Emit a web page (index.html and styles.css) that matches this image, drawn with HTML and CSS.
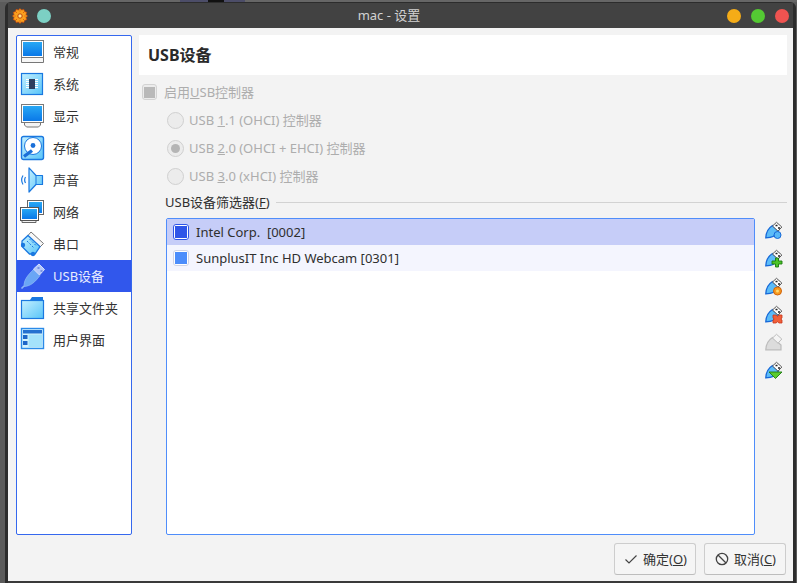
FILE: index.html
```html
<!DOCTYPE html>
<html lang="zh">
<head>
<meta charset="utf-8">
<title>mac - 设置</title>
<link rel="stylesheet" href="styles.css">
</head>
<body>
<svg class="defs" width="0" height="0">
  <defs>
    <linearGradient id="scr" x1="0" y1="0" x2="0" y2="1"><stop offset="0" stop-color="#28a8f4"/><stop offset="1" stop-color="#0a78e8"/></linearGradient>
    <linearGradient id="pale" x1="0" y1="0" x2="1" y2="1"><stop offset="0" stop-color="#c4f0ff"/><stop offset="1" stop-color="#58c4f8"/></linearGradient>
    <symbol id="plug" viewBox="0 0 17 17" overflow="visible">
      <path d="M.8 15.800 C1 10.500 3.500 6 7.500 3.500 L13.500 9 C11.500 13 8 15.800 .8 15.800Z" fill="#5cbcf8" stroke="#1668d8" stroke-width="1.300"/>
      <path d="M7.500 4 L11.500 .3 L16.800 5 L13 9.200Z" fill="#fff" stroke="#555" stroke-width="1"/>
      <path d="M10.500 3.500h2M13 6h2" stroke="#222" stroke-width="1.300"/>
    </symbol>
  </defs>
</svg>
<div class="strip"><span class="seg-a"></span><span class="seg-b"></span><span class="seg-a2"></span></div>
<div class="window">
  <header class="titlebar">
    <svg class="app-icon" width="16" height="16" viewBox="0 0 16 16"><path d="M8 .5l1.600 1.600 2.200-.7.700 2.200 2.200.7-.7 2.200L15.500 8l-1.500 1.500.7 2.200-2.200.7-.7 2.200-2.200-.7L8 15.500l-1.600-1.600-2.200.7-.7-2.200-2.200-.7.7-2.200L.5 8 2 6.500l-.7-2.200 2.200-.7.7-2.200 2.200.7Z" fill="#f9a11e" stroke="#c8480c" stroke-width=".7"/><circle cx="8" cy="8" r="2.200" fill="#ffe68a" stroke="#c0440c"/><path d="M8 2.500v1M8 12.500v1M2.500 8h1M12.500 8h1M4 4l.8.8M11.200 11.200l.8.800M12 4l-.8.800M4.800 11.200 4 12" stroke="#d8500c" stroke-width="1"/></svg>
    <span class="dot dot-teal"></span>
    <span class="title">mac - 设置</span>
    <span class="lights">
      <span class="dot dot-yellow"></span>
      <span class="dot dot-green"></span>
      <span class="dot dot-red"></span>
    </span>
  </header>
  <div class="content">
    <div class="columns">
      <nav class="sidebar">
        <div class="nav-item">
          <svg class="nav-icon" viewBox="0 0 26 26"><path d="M1.500 18.500v5h22v-5l-3-1h-16Z" fill="#f7f7f7" stroke="#777"/><rect x="1.500" y="1.500" width="22" height="17" fill="#fff" stroke="#7a7a7a"/><rect x="3" y="3" width="19" height="14" fill="url(#scr)"/></svg>
          <span>常规</span>
        </div>
        <div class="nav-item">
          <svg class="nav-icon" viewBox="0 0 26 26"><rect x="1.500" y="2.500" width="21" height="21" fill="url(#pale)" stroke="#1a78e0" stroke-width="1.200"/><rect x="9" y="8" width="6" height="10" fill="#2e3f5e"/><path d="M6 8.500h3M6 10.500h3M6 12.500h3M6 14.500h3M6 16.500h3M15 8.500h3M15 10.500h3M15 12.500h3M15 14.500h3M15 16.500h3" stroke="#fff" stroke-width="1"/></svg>
          <span>系统</span>
        </div>
        <div class="nav-item">
          <svg class="nav-icon" viewBox="0 0 26 26"><path d="M4.500 19v3l2 2h12l2-2v-3Z" fill="#f4f4f4" stroke="#777"/><rect x="1.500" y="1.500" width="22" height="18" fill="#fff" stroke="#7a7a7a"/><rect x="3" y="3" width="19" height="15" fill="url(#scr)"/></svg>
          <span>显示</span>
        </div>
        <div class="nav-item">
          <svg class="nav-icon" viewBox="0 0 26 26"><rect x="1.500" y="1.500" width="22" height="23" rx="2" fill="url(#pale)" stroke="#1a78e0" stroke-width="1.400"/><circle cx="13" cy="11" r="8.500" fill="#fff" stroke="#1a78e0"/><circle cx="13" cy="10.500" r="2.400" fill="#1a6fd8"/><path d="M4 21.500 12 15.500" stroke="#1a6fd8" stroke-width="3.400"/></svg>
          <span>存储</span>
        </div>
        <div class="nav-item">
          <svg class="nav-icon" viewBox="0 0 26 26"><path d="M9 .8 L16 8.500 H22.500 V17.500 H16 L9 25 Z" fill="url(#pale)" stroke="#1a78e0" stroke-width="1.200" stroke-linejoin="round"/><path d="M16 8.500V17.500" stroke="#1a78e0"/><path d="M3 8.500Q.3 13 3 17.500M5.500 10Q3.800 13 5.500 16" fill="none" stroke="#1a78e0" stroke-width="1.200"/></svg>
          <span>声音</span>
        </div>
        <div class="nav-item">
          <svg class="nav-icon" viewBox="0 0 26 26"><rect x="7.500" y="1.500" width="16" height="14" fill="#fff" stroke="#666"/><rect x="9" y="3" width="13" height="11" fill="url(#scr)"/><path d="M2 20v3.500h14V20" fill="#f2f2f2" stroke="#666"/><rect x=".5" y="8.500" width="18" height="13" fill="#fff" stroke="#555"/><rect x="2" y="10" width="15" height="10" fill="url(#scr)"/></svg>
          <span>网络</span>
        </div>
        <div class="nav-item">
          <svg class="nav-icon" viewBox="0 0 26 26"><path d="M11 1 L23.500 12.500 L20 16 L8 4.500Z" fill="#f8f8f8" stroke="#777"/><path d="M8 4.500 L20 15.500 L15 23 H9.500 L2 15.500 V10Z" fill="url(#pale)" stroke="#1a78e0" stroke-width="1.300"/><circle cx="3" cy="14" r="2.200" fill="#1a78e0"/><circle cx="13" cy="23" r="2.200" fill="#1a78e0"/><path d="M7 10l7 7M9.500 8l7 7" stroke="#1a78e0" stroke-dasharray="2 1.500"/></svg>
          <span>串口</span>
        </div>
        <div class="nav-item nav-item-active">
          <svg class="nav-icon" viewBox="0 0 26 26"><path d="M4 23.500 C4 17 7 13 13.500 6.500 L20 12.500 C15 19 11 23 4 23.500Z" fill="#6aa6f5" stroke="#8db6f6" stroke-width=".8"/><path d="M1.500 25.500 L4 23" stroke="#8db6f6" stroke-width="1.600"/><path d="M13.500 6 L19 1 L24.500 6.500 L19.500 12Z" fill="#b4c8f9" stroke="#dfe7fc" stroke-width=".9"/><path d="M17.500 5h2M20.500 8h2" stroke="#3a5cd0" stroke-width="1.200"/></svg>
          <span>USB设备</span>
        </div>
        <div class="nav-item">
          <svg class="nav-icon" viewBox="0 0 26 26"><path d="M10 5 12 2h11v5H10Z" fill="#1a78e0"/><rect x="1.500" y="5.500" width="22" height="18" fill="url(#pale)" stroke="#1a78e0" stroke-width="1.200"/></svg>
          <span>共享文件夹</span>
        </div>
        <div class="nav-item">
          <svg class="nav-icon" viewBox="0 0 26 26"><rect x="1.500" y="1.500" width="22" height="20" fill="#d4f2fd" stroke="#2a8ae8" stroke-width="1.400"/><rect x="3" y="3" width="19" height="3.500" fill="#2470d0"/><rect x="3" y="8" width="4.500" height="4" fill="#1e66c8"/><rect x="3" y="14" width="4.500" height="4" fill="#1e66c8"/><rect x="8.500" y="7.500" width="13.500" height="12.500" fill="#a4e2fb"/></svg>
          <span>用户界面</span>
        </div>
      </nav>
      <main class="main">
        <h1 class="page-title">USB设备</h1>
        <div class="settings">
          <label class="check-row">
            <span class="check"><span class="check-mark"></span></span>
            <span class="shift">启用<u>U</u>SB控制器</span>
          </label>
          <div class="radios">
            <div class="radio-row"><span class="radio"></span><span class="shift">USB <u>1</u>.1 (OHCI) 控制器</span></div>
            <div class="radio-row"><span class="radio radio-on"></span><span class="shift">USB <u>2</u>.0 (OHCI + EHCI) 控制器</span></div>
            <div class="radio-row"><span class="radio"></span><span class="shift">USB <u>3</u>.0 (xHCI) 控制器</span></div>
          </div>
          <div class="filters">
            <div class="group-label"><span>USB设备筛选器(<u>F</u>)</span><span class="rule"></span></div>
            <div class="filter-body">
              <div class="list">
                <div class="list-row list-row-first"><span class="box box-dark"></span><span class="shift">Intel Corp.&nbsp; [0002]</span></div>
                <div class="list-row list-row-second"><span class="box box-light"></span><span class="shift">SunplusIT Inc HD Webcam [0301]</span></div>
              </div>
              <div class="toolbar">
                <svg class="tool" viewBox="0 0 17 17"><use href="#plug"/><circle cx="12.500" cy="13" r="3.500" fill="#58b8f6" stroke="#1668d8"/></svg>
                <svg class="tool" viewBox="0 0 17 17"><use href="#plug"/><path d="M10.500 8h3V11H17v3h-3.500v3h-3v-3H7v-3h3.500Z" fill="#4cc428" stroke="#1d7a10" stroke-width=".9"/></svg>
                <svg class="tool" viewBox="0 0 17 17"><use href="#plug"/><circle cx="12.500" cy="13" r="4" fill="#f79a1e" stroke="#d0620c"/><circle cx="12.500" cy="13" r="1.500" fill="#ffd870"/></svg>
                <svg class="tool" viewBox="0 0 17 17"><use href="#plug"/><path d="M8 9h3l1.500 1.300L14 9h3v3l-1.200 1L17 14v3h-3l-1.500-1.200L11 17H8v-3l1.200-1L8 12Z" fill="#f0603a" stroke="#c8361c" stroke-width=".8"/></svg>
                <svg class="tool" viewBox="0 0 17 17"><path d="M.8 15.800 C1 10.500 3.500 6 7.500 3.500 L16 11 V15.800Z" fill="#dcdcdc" stroke="#bcbcbc" stroke-width="1.200"/><path d="M7.500 4 L11.500 .3 L16.800 5 L13 9.200Z" fill="#f4f4f4" stroke="#bdbdbd" stroke-width="1"/></svg>
                <svg class="tool" viewBox="0 0 17 17"><use href="#plug"/><path d="M4 10H17L10.500 16.500Z" fill="#5acb2e" stroke="#1d7a10" stroke-width=".9"/></svg>
              </div>
            </div>
          </div>
        </div>
      </main>
    </div>
    <footer class="footer">
      <button class="btn" type="button">
        <svg class="btn-icon" width="16" height="16" viewBox="0 0 16 16"><path d="M2.500 8.500 6 12 13.500 4.500" fill="none" stroke="#444" stroke-width="1.200"/></svg>
        <span class="shift">确定(<u>O</u>)</span>
      </button>
      <button class="btn" type="button">
        <svg class="btn-icon" width="16" height="16" viewBox="0 0 16 16"><circle cx="8" cy="8" r="5.700" fill="none" stroke="#444" stroke-width="1.300"/><path d="M4 4l8 8" stroke="#444" stroke-width="1.300"/></svg>
        <span class="shift">取消(<u>C</u>)</span>
      </button>
    </footer>
  </div>
</div>
</body>
</html>
```

FILE: styles.css
```css
* { box-sizing: border-box; }
html, body { margin: 0; height: 583px; overflow: hidden; }
body {
  background: #5b5b5b;
  color: #2f2f2f;
  font: 13px/1.2 "Noto Sans", "Noto Sans CJK SC", sans-serif;
}
.defs { display: block; height: 0; }
.strip { display: flex; height: 2px; background: #666; }
.seg-a { width: 28px; margin-left: 180px; background: #4c4d68; }
.seg-b { width: 16px; background: #111; }
.seg-a2 { width: 21px; background: #4c4d68; }

.window {
  width: 791px;
  height: 581px;
  margin-left: 5px;
  background: #3a3a3a;
  border: solid #2c2c2c;
  border-width: 1px 3px 0;
  border-radius: 6px 6px 0 0;
  display: flex;
  flex-direction: column;
}
.titlebar {
  height: 25px;
  flex: none;
  background: #424242;
  display: flex;
  align-items: center;
  padding: 0 4px;
  color: #d2d2d2;
}
.app-icon { flex: none; }
.dot { width: 14px; height: 14px; border-radius: 50%; flex: none; }
.dot-teal { background: #7cd0c4; margin-left: 9px; }
.dot-yellow { background: #f5ac17; }
.dot-green { background: #54c933; }
.dot-red { background: #ef5350; }
.title { flex: 1; text-align: center; }
.lights { display: flex; gap: 10px; }

.content {
  height: 553px;
  flex: none;
  background: #f3f3f3;
  padding: 7px 6px 0 8px;
}
.columns { display: flex; gap: 7px; height: 500px; }
.sidebar {
  width: 116px;
  flex: none;
  background: #fff;
  border: 1px solid #3568ee;
  border-radius: 2px;
}
.nav-item {
  height: 32px;
  display: flex;
  align-items: center;
  gap: 7px;
  padding-left: 3px;
  color: #333;
}
.nav-item span { margin-top: 2px; }
.nav-item-active { background: #3157ec; color: #e8edff; }
.nav-icon { width: 26px; height: 26px; flex: none; }
.shift { margin-top: 2px; }

.main { flex: 1; min-width: 0; display: flex; flex-direction: column; }
.page-title {
  margin: 0;
  height: 40px;
  flex: none;
  background: #fff;
  padding-left: 9px;
  font-size: 16px;
  font-weight: 700;
  line-height: 40px;
  color: #2a2a2a;
}
.settings { padding: 9px 0 0 3px; color: #adadad; flex: 1; display: flex; flex-direction: column; }
.check-row { display: flex; align-items: center; gap: 7px; height: 16px; }
.check {
  width: 15px;
  height: 16px;
  border: 1px solid #d3d3d3;
  border-radius: 3px;
  background: #ececec;
  display: flex;
  align-items: center;
  justify-content: center;
}
.check-mark { width: 11px; height: 11px; background: #b9b9b9; }
.radios { margin: 6px 0 0 25px; }
.radio-row { height: 28px; display: flex; align-items: center; gap: 5px; }
.radio {
  width: 17px;
  height: 17px;
  border-radius: 50%;
  border: 1px solid #d0d0d0;
  background: #ececec;
  display: flex;
  align-items: center;
  justify-content: center;
  flex: none;
}
.radio-on::after {
  content: "";
  width: 9px;
  height: 9px;
  border-radius: 50%;
  background: #b5b5b5;
}
.filters { margin-left: 23px; flex: 1; display: flex; flex-direction: column; color: #2f2f2f; }
.group-label { height: 24px; display: flex; align-items: center; gap: 6px; margin-bottom: 4px; padding-top: 1px; }
.rule { flex: 1; height: 1px; background: #d2d2d2; }
.filter-body { flex: 1; display: flex; gap: 10px; min-height: 0; margin-left: 1px; }
.list {
  width: 589px;
  background: #fff;
  border: 1px solid #4f8dfa;
  border-radius: 2px;
}
.list-row { height: 26px; display: flex; align-items: center; gap: 7px; padding-left: 6px; }
.list-row-first { background: #c6cdf8; }
.list-row-second { background: #f4f5fe; }
.box {
  width: 16px;
  height: 16px;
  border-radius: 3px;
  background: #fff;
  display: flex;
  align-items: center;
  justify-content: center;
}
.box::after { content: ""; width: 12px; height: 12px; }
.box-dark { border: 1px solid #2f55e8; }
.box-dark::after { background: #2f55e8; }
.box-light { border: 1px solid #cfd3e6; }
.box-light::after { background: #4c8dfb; }
.toolbar { display: flex; flex-direction: column; gap: 11px; padding-top: 4px; }
.tool { width: 17px; height: 17px; flex: none; overflow: visible; }

.footer { display: flex; justify-content: flex-end; gap: 8px; margin: 8px 1px 0 0; }
.btn {
  width: 82px;
  height: 32px;
  background: #f5f5f5;
  border: 1px solid #cdcdcd;
  border-bottom-color: #bdbdbd;
  border-radius: 3px;
  font: inherit;
  color: #333;
  display: flex;
  align-items: center;
  justify-content: center;
  gap: 4px;
  padding: 0;
}
.btn-icon { flex: none; }
```
